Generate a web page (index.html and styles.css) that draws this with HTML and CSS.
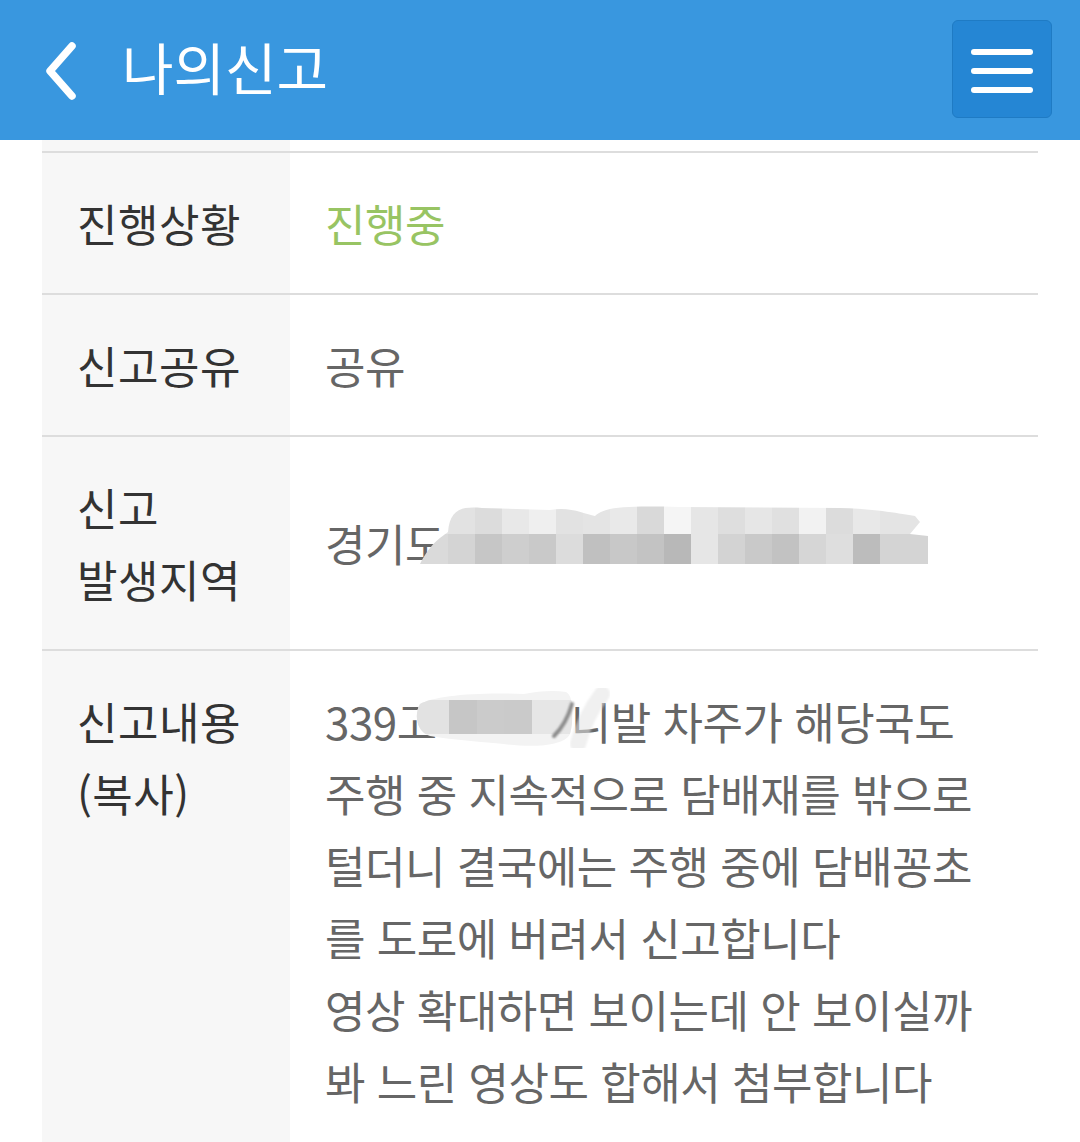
FILE: index.html
```html
<!DOCTYPE html>
<html lang="ko">
<head>
<meta charset="utf-8">
<title>나의신고</title>
<link rel="stylesheet" href="styles.css">
</head>
<body>
<header class="topbar">
  <a class="back" href="#" aria-label="뒤로">
    <svg width="40" height="60" viewBox="0 0 40 60"><path d="M30 5 L8 30 L30 55" fill="none" stroke="#fff" stroke-width="7.5" stroke-linecap="round" stroke-linejoin="round"/></svg>
  </a>
  <h1 class="title">나의신고</h1>
  <button class="menu" aria-label="메뉴">
    <span class="bar"></span><span class="bar"></span><span class="bar"></span>
  </button>
</header>
<main class="table">
  <div class="row row-cut"><div class="label"></div><div class="value"></div></div>
  <div class="row">
    <div class="label">진행상황</div>
    <div class="value status">진행중</div>
  </div>
  <div class="row">
    <div class="label">신고공유</div>
    <div class="value">공유</div>
  </div>
  <div class="row">
    <div class="label">신고<br>발생지역</div>
    <div class="value center">
      <span class="addr">경기도</span>
      <svg class="mosaic addr-mosaic" width="510" height="60" viewBox="0 0 510 60">
        <defs>
          <clipPath id="blob">
            <path d="M28 28 C30 6 40 2 62 4 L130 6 C150 2 165 10 175 12 C185 2 210 2 260 3 L420 4 C460 5 480 10 495 12 L500 18 L490 30 L508 32 L508 60 L0 60 C10 40 20 34 28 28 Z"/>
          </clipPath>
        </defs>
        <g clip-path="url(#blob)">
          <rect x="0" y="0" width="28" height="30" fill="#e4e4e4"/>
          <rect x="28" y="0" width="27" height="30" fill="#e2e2e2"/>
          <rect x="55" y="0" width="27" height="30" fill="#dcdcdc"/>
          <rect x="82" y="0" width="27" height="30" fill="#e8e8e8"/>
          <rect x="109" y="0" width="27" height="30" fill="#efefef"/>
          <rect x="136" y="0" width="27" height="30" fill="#e2e2e2"/>
          <rect x="163" y="0" width="27" height="30" fill="#e4e4e4"/>
          <rect x="190" y="0" width="27" height="30" fill="#e9e9e9"/>
          <rect x="217" y="0" width="27" height="30" fill="#d9d9d9"/>
          <rect x="244" y="0" width="27" height="30" fill="#f5f5f5"/>
          <rect x="271" y="0" width="27" height="30" fill="#e6e6e6"/>
          <rect x="298" y="0" width="27" height="30" fill="#dedede"/>
          <rect x="325" y="0" width="27" height="30" fill="#e6e6e6"/>
          <rect x="352" y="0" width="27" height="30" fill="#e0e0e0"/>
          <rect x="379" y="0" width="27" height="30" fill="#f2f2f2"/>
          <rect x="406" y="0" width="27" height="30" fill="#dcdcdc"/>
          <rect x="433" y="0" width="27" height="30" fill="#e8e8e8"/>
          <rect x="460" y="0" width="50" height="30" fill="#e4e4e4"/>
          <rect x="0" y="30" width="28" height="30" fill="#dadada"/>
          <rect x="28" y="30" width="27" height="30" fill="#d4d4d4"/>
          <rect x="55" y="30" width="27" height="30" fill="#c6c6c6"/>
          <rect x="82" y="30" width="27" height="30" fill="#cecece"/>
          <rect x="109" y="30" width="27" height="30" fill="#c9c9c9"/>
          <rect x="136" y="30" width="27" height="30" fill="#dcdcdc"/>
          <rect x="163" y="30" width="27" height="30" fill="#c0c0c0"/>
          <rect x="190" y="30" width="27" height="30" fill="#c8c8c8"/>
          <rect x="217" y="30" width="27" height="30" fill="#c3c3c3"/>
          <rect x="244" y="30" width="27" height="30" fill="#b8b8b8"/>
          <rect x="271" y="30" width="27" height="30" fill="#e6e6e6"/>
          <rect x="298" y="30" width="27" height="30" fill="#d3d3d3"/>
          <rect x="325" y="30" width="27" height="30" fill="#c9c9c9"/>
          <rect x="352" y="30" width="27" height="30" fill="#c2c2c2"/>
          <rect x="379" y="30" width="27" height="30" fill="#d6d6d6"/>
          <rect x="406" y="30" width="27" height="30" fill="#dedede"/>
          <rect x="433" y="30" width="27" height="30" fill="#bcbcbc"/>
          <rect x="460" y="30" width="50" height="30" fill="#d4d4d4"/>
        </g>
      </svg>
    </div>
  </div>
  <div class="row row-last">
    <div class="label">신고내용<br>(복사)</div>
    <div class="value content">
      <p class="line">339고<span class="plate-gap"></span>니발 차주가 해당국도</p>
      <svg class="mosaic plate-mosaic" width="200" height="60" viewBox="0 0 200 60">
        <defs>
          <filter id="soft" x="-30%" y="-30%" width="160%" height="160%"><feGaussianBlur stdDeviation="1.2"/></filter>
          <clipPath id="blob2"><path d="M6 16 C20 8 60 4 110 6 C125 3 140 2 152 4 C160 8 160 30 156 46 C150 58 120 60 90 56 C70 54 40 52 16 48 C2 44 0 26 6 16 Z"/></clipPath>
        </defs>
        <g clip-path="url(#blob2)">
          <rect x="0" y="0" width="200" height="60" fill="#f3f3f3"/>
          <rect x="2" y="12" width="33" height="34" fill="#e2e2e2"/>
          <rect x="35" y="12" width="28" height="34" fill="#c6c6c6"/>
          <rect x="63" y="12" width="27" height="34" fill="#cbcbcb"/>
          <rect x="90" y="12" width="28" height="34" fill="#cacaca"/>
          <rect x="118" y="12" width="40" height="34" fill="#e6e6e6"/>
        </g>
        <path d="M140 48 C148 40 154 30 158 16" fill="none" stroke="#8c8c8c" stroke-width="4" stroke-linecap="round" filter="url(#soft)"/>
        <path d="M164 56 C168 40 176 22 188 6" fill="none" stroke="#e4e4e4" stroke-opacity="0.55" stroke-width="16" stroke-linecap="round" filter="url(#soft)"/>
      </svg>
      <p class="line">주행 중 지속적으로 담배재를 밖으로</p>
      <p class="line">털더니 결국에는 주행 중에 담배꽁초</p>
      <p class="line">를 도로에 버려서 신고합니다</p>
      <p class="line">영상 확대하면 보이는데 안 보이실까</p>
      <p class="line">봐 느린 영상도 합해서 첨부합니다</p>
    </div>
  </div>
</main>
</body>
</html>
```

FILE: styles.css
```css
* { box-sizing: border-box; }

html, body {
  margin: 0;
  padding: 0;
  background: #ffffff;
  font-family: "Noto Sans CJK KR", "Noto Sans", sans-serif;
  overflow: hidden;
}

.topbar {
  height: 140px;
  background: #3997df;
  display: flex;
  align-items: center;
  padding: 0 28px 0 42px;
}

.back {
  display: flex;
  width: 40px;
  height: 60px;
  margin-top: 2px;
}

.title {
  margin: 0 0 0 40px;
  font-size: 56px;
  font-weight: 400;
  color: #ffffff;
  letter-spacing: 0;
  line-height: 1;
  padding-bottom: 8px;
}

.menu {
  margin-left: auto;
  width: 100px;
  height: 98px;
  background: #2586d4;
  border: 1px solid #1f7bc4;
  border-radius: 6px;
  display: flex;
  flex-direction: column;
  align-items: center;
  justify-content: flex-start;
  gap: 13px;
  padding: 28px 0 0 0;
  margin-bottom: 2px;
}

.bar {
  display: block;
  width: 62px;
  height: 6px;
  border-radius: 3px;
  background: #ffffff;
}

.table {
  margin: 0 42px;
  display: flex;
  flex-direction: column;
}

.row {
  display: grid;
  grid-template-columns: 248px 1fr;
  border-top: 2px solid #dddddd;
}

.row-cut {
  height: 11px;
  border-top: none;
}

.label {
  background: #f7f7f7;
  padding: 34px 0 34px 35px;
  font-size: 44px;
  line-height: 72px;
  color: #333333;
  letter-spacing: 0.5px;
}

.row-cut .label { padding: 0; }

.value {
  padding: 34px 0 34px 35px;
  font-size: 44px;
  line-height: 72px;
  color: #666666;
  letter-spacing: -0.5px;
  white-space: nowrap;
}

.row-cut .value { padding: 0; }

.status { color: #98c463; }

.center {
  display: flex;
  align-items: center;
  position: relative;
}

.mosaic { position: absolute; }

.addr-mosaic {
  left: 130px;
  top: 67px;
}

.row-last {
  min-height: 520px;
}

.content { position: relative; }

.line {
  margin: 0;
  height: 72px;
}

.plate-gap {
  display: inline-block;
  width: 134px;
}

.plate-mosaic {
  left: 124px;
  top: 37px;
}
```
